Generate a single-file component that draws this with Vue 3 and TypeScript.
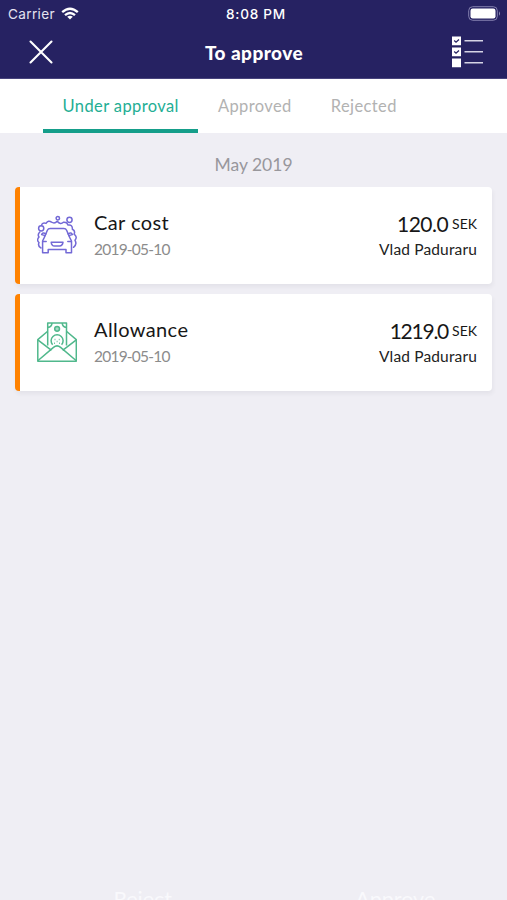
<script setup lang="ts">
import { ref } from 'vue'

interface Expense {
  kind: 'car' | 'allowance'
  title: string
  date: string
  amount: string
  currency: string
  person: string
}

const tabs = ['Under approval', 'Approved', 'Rejected']
const active = ref(0)

const expenses: Expense[] = [
  { kind: 'car', title: 'Car cost', date: '2019-05-10', amount: '120.0', currency: 'SEK', person: 'Vlad Paduraru' },
  { kind: 'allowance', title: 'Allowance', date: '2019-05-10', amount: '1219.0', currency: 'SEK', person: 'Vlad Paduraru' },
]
</script>

<template>
  <div class="screen">
    <header class="top">
      <div class="status">
        <div class="carrier">
          <span>Carrier</span>
          <svg width="18" height="13" viewBox="0 0 18 13" fill="none" stroke="#fff" stroke-width="2.3">
            <path d="M1.2 5.2Q9 -1.8 16.8 5.2" />
            <path d="M4 8.2Q9 3.8 14 8.2" />
            <path d="M9 12.4L6.2 9.7Q9 7.6 11.8 9.7Z" fill="#fff" stroke="none" />
          </svg>
        </div>
        <span class="time">8:08 PM</span>
        <svg class="battery" width="33" height="15" viewBox="0 0 33 15">
          <rect x="0.7" y="0.7" width="28.6" height="13.6" rx="4" fill="none" stroke="#837fae" />
          <rect x="2.5" y="2.5" width="25" height="10" rx="2.2" fill="#fff" />
          <path d="M31 5.2Q33 7.5 31 9.8Z" fill="#918eb8" />
        </svg>
      </div>
      <div class="nav">
        <button class="icon-button" aria-label="Close">
          <svg width="24" height="24" viewBox="0 0 24 24" stroke="#fff" stroke-width="2.1" stroke-linecap="round">
            <path d="M1.5 1.5L22.5 22.5M22.5 1.5L1.5 22.5" />
          </svg>
        </button>
        <h1>To approve</h1>
        <button class="icon-button" aria-label="Select">
          <svg width="32" height="32" viewBox="0 0 32 32" fill="none">
            <path d="M0 .5h9v8.8H0zM0 11.5h9v8.8H0zM0 22.5h9v8.8H0z" fill="#fff" />
            <path d="M2.2 4.6L4 6.2L7 3.4M2.2 15.6L4 17.2L7 14.4" stroke="#262262" stroke-width="1.3" />
            <path d="M12.5 4.8H31M12.5 15.8H31M12.5 26.8H31" stroke="#d5d4e5" stroke-width="1.5" />
          </svg>
        </button>
      </div>
    </header>

    <nav class="tabs">
      <button v-for="(tab, i) in tabs" :key="tab" class="tab" :class="{ active: i === active }" @click="active = i">
        <span>{{ tab }}</span>
      </button>
    </nav>

    <main>
      <h2><span>May 2019</span></h2>
      <article v-for="item in expenses" :key="item.kind" class="card" :class="item.kind">
        <svg v-if="item.kind === 'car'" class="kind" width="40" height="40" viewBox="0 0 40 40" fill="none" stroke="#7369d6" stroke-width="1.5" stroke-linecap="round" stroke-linejoin="round">
          <circle cx="20.8" cy="3.2" r="1.7" />
          <circle cx="32.5" cy="4.8" r="2.6" />
          <circle cx="4.2" cy="13.3" r="2.6" />
          <path d="M4.5 10.5Q5 7.2 9 8.4Q11.5 4.7 14.5 7.2Q17.8 9 20.2 6.2Q23.5 10.1 26.4 7.2Q30 6.8 31 10.1Q35.6 9.2 35.4 14.2Q38.6 15.7 37.1 19.2Q40.8 22 38 25.3Q40.4 29.5 36.5 32.3" />
          <path d="M2.8 17Q.2 19.5 2 22Q-.8 25.3 2 27.5Q.5 31.5 4 33" />
          <path d="M5.6 37.8V26L7.2 22.6L10.4 15.2Q11.2 13.4 13.2 13.4H26.8Q28.8 13.4 29.6 15.2L32.8 22.6L34.5 26V37.8H29V34.6H11.2V37.8Z" />
          <path d="M8.2 20.6L4.6 19.6Q5.4 17 9 18.8M31.8 20.6L35.4 19.6Q34.6 17 31 18.8M5.8 26.6H9.2M34.2 26.6H30.8M14.2 27.2H26Q25.6 31 22.5 31H17.6Q14.5 31 14.2 27.2Z" />
        </svg>
        <svg v-else class="kind" width="40" height="40" viewBox="0 0 40 40" fill="none" stroke="#50b88c" stroke-width="1.5" stroke-linejoin="round">
          <path d="M10.7 9.2L.8 17.6V39.2H39.3V17.6L29.4 9.2" />
          <path d="M.8 17.8L14.5 28.4M39.3 17.8L25.6 28.4M.8 38.8L16.5 25.4Q20 22.4 23.6 25.4L39.3 38.8" />
          <path d="M10.7 23.5V1H29.5V23.5M11 5.4Q14.6 5 15 1.4M29.2 5.4Q25.6 5 25.2 1.4" />
          <circle cx="20.1" cy="6.8" r="2.4" fill="#a7dbc6" />
          <path d="M15.6 22.8A6 6 0 1 1 24.6 22.8" />
          <path d="M17.6 17.4h.8M21.8 17.4h.8M19.7 19.6h.8M17.2 21.3h.8M22.2 21.3h.8" />
        </svg>
        <div class="details">
          <div class="title"><span>{{ item.title }}</span></div>
          <div class="date"><span>{{ item.date }}</span></div>
        </div>
        <div class="value">
          <div class="sum"><span class="amount">{{ item.amount }}</span><span class="currency">{{ item.currency }}</span></div>
          <div class="person"><span>{{ item.person }}</span></div>
        </div>
      </article>
    </main>

    <footer>
      <span>Reject</span>
      <span>Approve</span>
    </footer>
  </div>
</template>

<style>
body {
  overflow: hidden;
}
</style>

<style scoped>
.screen {
  display: flex;
  flex-direction: column;
  width: 507px;
  height: 900px;
  overflow: hidden;
  background: #efeef4;
  font-family: Lato, "Liberation Sans", sans-serif;
}
button {
  padding: 0;
  border: 0;
  background: none;
  font: inherit;
}
svg {
  display: block;
  flex: none;
}
.top {
  flex: none;
  height: 79px;
  box-sizing: border-box;
  background: #262262;
  border-bottom: 1px solid #48447d;
  color: #fff;
}
.status {
  display: grid;
  grid-template-columns: 1fr auto 1fr;
  align-items: center;
  height: 27px;
  padding: 0 6px 0 8px;
  font: 13.6px Inter, sans-serif;
}
.carrier {
  display: flex;
  align-items: center;
  gap: 6px;
  letter-spacing: 0.35px;
  color: #e4e3f0;
}
.time {
  font-weight: 500;
  letter-spacing: 0.75px;
  padding-left: 3px;
}
.battery {
  justify-self: end;
}
.nav {
  display: grid;
  grid-template-columns: 1fr auto 1fr;
  align-items: center;
  height: 50px;
  padding: 0 23px 0 29px;
}
.nav .icon-button:last-child {
  justify-self: end;
}
h1 {
  margin: 0 0 0 2px;
  padding: 2px 7px 0 0;
  font-size: 19px;
  line-height: 24px;
  font-weight: 900;
  letter-spacing: 0.45px;
}
.tabs {
  flex: none;
  display: flex;
  height: 54px;
  padding-left: 43px;
  background: #fff;
}
.tab {
  box-sizing: border-box;
  height: 54px;
  padding: 4px 19.6px 0;
  border-bottom: 4px solid transparent;
  color: #b2b2b2;
  font-size: 16.5px;
  letter-spacing: 0.38px;
}
.tab.active {
  color: #23ae94;
  border-bottom-color: #159e8a;
}
main {
  flex: 1;
  display: flex;
  flex-direction: column;
  gap: 10px;
  padding: 20px 15px 0;
}
h2 {
  margin: 0;
  height: 24px;
  line-height: 24px;
  text-align: center;
  font-size: 17.5px;
  font-weight: 400;
  color: #98979c;
}
.card {
  display: flex;
  box-sizing: border-box;
  height: 97px;
  padding: 22px 15px 0 17px;
  background: #fff;
  border-left: 5px solid #ff8200;
  border-radius: 4px;
  box-shadow: 1px 3px 4px rgba(50, 45, 70, 0.06);
}
.kind {
  margin: 6px 17px 0 0;
}
.details {
  flex: 1;
}
.title,
.sum {
  height: 28px;
  line-height: 27px;
  font-size: 20px;
  color: #171717;
}
.title {
  letter-spacing: 0.4px;
}
.sum {
  display: flex;
  justify-content: flex-end;
  align-items: center;
  gap: 4px;
}
.amount {
  font-size: 21px;
  letter-spacing: -0.55px;
}
.allowance .amount {
  letter-spacing: -1.25px;
}
.currency {
  padding-top: 1px;
  font-size: 14px;
}
.date,
.person {
  height: 24px;
  line-height: 24px;
  font-size: 15.5px;
  color: #8c8c8c;
}
.date {
  letter-spacing: -0.78px;
}
.person {
  color: #222;
  text-align: right;
  letter-spacing: 0.15px;
}
footer {
  flex: none;
  display: grid;
  grid-template-columns: 1fr 1fr;
  height: 13px;
  overflow: visible;
  color: #f9f9fc;
  font-size: 21.5px;
  line-height: 24px;
  text-align: center;
}
footer span:first-child {
  padding-left: 32px;
}
footer span:last-child {
  padding-left: 30px;
}
</style>
